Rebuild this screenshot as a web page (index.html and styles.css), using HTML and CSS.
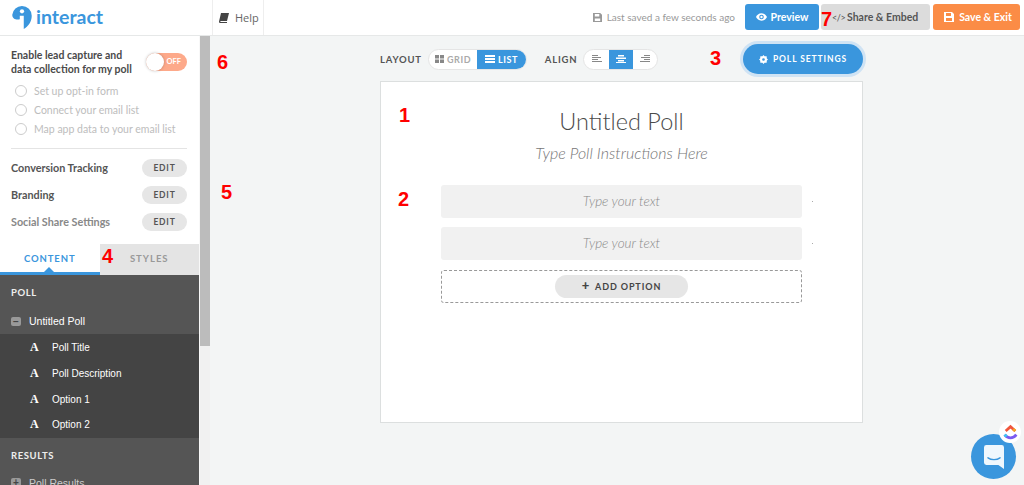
FILE: index.html
```html
<!DOCTYPE html>
<html lang="en">
<head>
<meta charset="utf-8">
<title>Interact poll editor</title>
<link rel="stylesheet" href="styles.css">
</head>
<body>
<header class="topbar">
  <div class="logo">
    <svg class="logo-mark" width="22" height="23" viewBox="0 0 22 26"><path fill="#3a96dd" d="M11 0a11 11 0 0 1 11 11c0 7-4 12-9 15V11H8.500v4C5 16 0 15 0 10A11 11 0 0 1 11 0z"/><circle cx="11" cy="6" r="2.400" fill="#fff"/></svg>
    <span class="logo-text">interact</span>
  </div>
  <div class="help">
    <svg width="10" height="10" viewBox="0 0 10 10"><path fill="#444" d="M2 0h8L8 8H1.500a.8.8 0 0 0 0 1H8v1H1Q0 10 0 8.500z"/></svg>
    <span>Help</span>
  </div>
  <div class="top-actions">
    <span class="saved">
      <svg width="9" height="9" viewBox="0 0 10 10"><path fill="#999" d="M0 0h8l2 2v8H0zm2 1v3h5V1zm0 5v3h6V6z"/></svg>
      Last saved a few seconds ago
    </span>
    <button class="top-btn btn-preview">
      <svg width="11" height="8" viewBox="0 0 12 8"><path fill="#fff" d="M6 0c3 0 5 2 6 4-1 2-3 4-6 4S1 6 0 4c1-2 3-4 6-4zm0 1.500a2.500 2.500 0 1 0 0 5 2.500 2.500 0 0 0 0-5z"/><circle cx="6" cy="4" r="1.300" fill="#fff"/></svg>
      Preview
    </button>
    <button class="top-btn btn-share">
      <span class="code-mark">&lt;/&gt;</span>
      Share &amp; Embed
    </button>
    <button class="top-btn btn-save">
      <svg width="10" height="10" viewBox="0 0 10 10"><path fill="#fff" d="M0 0h8l2 2v8H0zm2 1v3h5V1zm0 5v3h6V6z"/></svg>
      Save &amp; Exit
    </button>
  </div>
</header>

<div class="workspace">
  <aside class="sidebar">
    <section class="lead">
      <div class="lead-head">
        <p class="lead-title">Enable lead capture and data collection for my poll</p>
        <div class="toggle"><span class="knob"></span><span class="toggle-label">OFF</span></div>
      </div>
      <ul class="steps">
        <li><span class="radio"></span>Set up opt-in form</li>
        <li><span class="radio"></span>Connect your email list</li>
        <li><span class="radio"></span>Map app data to your email list</li>
      </ul>
    </section>
    <section class="settings">
      <div class="setting"><span>Conversion Tracking</span><button class="edit">EDIT</button></div>
      <div class="setting"><span>Branding</span><button class="edit">EDIT</button></div>
      <div class="setting muted"><span>Social Share Settings</span><button class="edit">EDIT</button></div>
    </section>
    <nav class="tabs">
      <div class="tab active">CONTENT</div>
      <div class="tab">STYLES</div>
    </nav>
    <section class="tree">
      <h3 class="tree-head">POLL</h3>
      <div class="tree-row"><span class="square">&minus;</span>Untitled Poll</div>
      <ul class="tree-items">
        <li><span class="glyph">A</span>Poll Title</li>
        <li><span class="glyph">A</span>Poll Description</li>
        <li><span class="glyph">A</span>Option 1</li>
        <li><span class="glyph">A</span>Option 2</li>
      </ul>
      <h3 class="tree-head results">RESULTS</h3>
      <div class="tree-row dim"><span class="square">+</span>Poll Results</div>
    </section>
  </aside>
  <div class="scrollbar"><div class="thumb"></div></div>

  <main class="stage">
    <div class="toolbar">
      <span class="tool-label">LAYOUT</span>
      <div class="segment">
        <span class="seg seg-text">
          <svg width="9" height="8" viewBox="0 0 9 8"><path fill="#888" d="M0 0h4v3.500H0zM5 0h4v3.500H5zM0 4.500h4V8H0zM5 4.500h4V8H5z"/></svg>
          GRID
        </span>
        <span class="seg seg-text on">
          <svg width="10" height="8" viewBox="0 0 10 8"><path fill="#fff" d="M0 0h10v2H0zM0 3h10v2H0zM0 6h10v2H0z"/></svg>
          LIST
        </span>
      </div>
      <span class="tool-label align-label">ALIGN</span>
      <div class="segment">
        <span class="seg seg-icon"><svg width="10" height="8" viewBox="0 0 10 8"><path fill="#888" d="M0 0h6v1H0zM0 2h9v1H0zM0 4h6v1H0zM0 6h10v1H0z"/></svg></span>
        <span class="seg seg-icon on"><svg width="10" height="8" viewBox="0 0 10 8"><path fill="#fff" d="M2 0h6v1.500H2zM0 2.500h10V4H0zM2 5h6v1.500H2zM0 7h10v1H0z"/></svg></span>
        <span class="seg seg-icon"><svg width="10" height="8" viewBox="0 0 10 8"><path fill="#888" d="M4 0h6v1H4zM1 2h9v1H1zM4 4h6v1H4zM0 6h10v1H0z"/></svg></span>
      </div>
      <button class="poll-settings">
        <svg width="9" height="9" viewBox="0 0 10 10"><path fill="#fff" fill-rule="evenodd" d="M5 0l1.200 1.300L8.500 1.500l.2 2.300L10 5 8.700 6.200 8.500 8.500l-2.300.2L5 10 3.800 8.700 1.500 8.500l-.2-2.300L0 5l1.300-1.200.2-2.300 2.300-.2zM5 3.500a1.500 1.500 0 1 0 0 3 1.500 1.500 0 0 0 0-3z"/></svg>
        POLL SETTINGS
      </button>
    </div>

    <article class="canvas">
      <h1 class="poll-title">Untitled Poll</h1>
      <p class="poll-desc">Type Poll Instructions Here</p>
      <div class="options">
        <div class="option-row"><div class="option">Type your text</div><span class="dot"></span></div>
        <div class="option-row"><div class="option">Type your text</div><span class="dot"></span></div>
        <div class="add-box"><button class="add-btn"><b>+</b> ADD OPTION</button></div>
      </div>
    </article>
  </main>
</div>

<span class="mark m1">1</span>
<span class="mark m2">2</span>
<span class="mark m3">3</span>
<span class="mark m4">4</span>
<span class="mark m5">5</span>
<span class="mark m6">6</span>
<span class="mark m7">7</span>

<div class="chat">
  <svg width="20" height="24" viewBox="0 0 25 30"><path fill="#fff" fill-opacity=".92" d="M3 0h19a3 3 0 0 1 3 3v27l-7-5H3a3 3 0 0 1-3-3V3a3 3 0 0 1 3-3z"/><path fill="none" stroke="#3a96dd" stroke-width="1.800" stroke-linecap="round" d="M5 16c4 3 11 3 15 0"/></svg>
</div>
<div class="clickup">
  <svg width="15" height="16" viewBox="0 0 14 15"><path fill="none" stroke="#f0563c" stroke-width="2.600" d="M2.500 6.500L7 2.500l4.500 4"/><path fill="none" stroke="#7b5cf0" stroke-width="2.600" d="M1.500 10c3 4 8 4 11 0"/><path fill="none" stroke="#f5a623" stroke-width="2.600" d="M9.500 4.800l2 1.700"/><path fill="none" stroke="#3cc8f0" stroke-width="2.600" d="M1.500 10l1.800 1.800"/></svg>
</div>
```

FILE: styles.css
```css
* { box-sizing: border-box; }
html, body { height: 100%; }
body {
  margin: 0;
  height: 485px;
  overflow: hidden;
  position: relative;
  background: #f3f5f5;
  color: #444;
  font-family: "Lato", "Liberation Sans", sans-serif;
}
button { font-family: inherit; border: 0; cursor: pointer; }
ul { list-style: none; margin: 0; padding: 0; }
h1, h3, p { margin: 0; }

.topbar {
  height: 36px;
  display: flex;
  align-items: stretch;
  background: #fff;
  border-bottom: 1px solid #e6e8e8;
}
.logo {
  width: 212px;
  display: flex;
  align-items: flex-start;
  gap: 3px;
  padding: 6px 0 0 11px;
}
.logo-text {
  color: #3a96dd;
  font-size: 19.500px;
  font-weight: 700;
  line-height: 22px;
}
.help {
  width: 52px;
  display: flex;
  align-items: center;
  gap: 6px;
  padding-left: 6px;
  border-left: 1px solid #eee;
  border-right: 1px solid #eee;
  color: #666;
  font-size: 11px;
  font-family: "Open Sans", sans-serif;
}
.top-actions {
  flex: 1;
  display: flex;
  align-items: flex-start;
  padding-top: 4px;
  padding-right: 4px;
  justify-content: flex-end;
}
.saved {
  display: flex;
  align-items: center;
  gap: 5px;
  height: 26px;
  color: #999;
  font-size: 10px;
  margin-right: 10px;
}
.top-btn {
  height: 26px;
  border-radius: 3px;
  display: flex;
  align-items: center;
  justify-content: center;
  gap: 4px;
  padding: 0;
  font-size: 10.500px;
  font-weight: 700;
}
.btn-preview { width: 74px; background: #3a96dd; color: #fff; }
.btn-share {
  width: 109px;
  margin-left: 2px;
  justify-content: flex-start;
  gap: 3px;
  padding-left: 11px;
  background: #dcdcdc;
  color: #555;
}
.btn-save { width: 87px; margin-left: 3px; padding-left: 3px; background: #fb8c46; color: #fff; gap: 5px; }
.code-mark { width: 12px; font-size: 9px; font-weight: 400; letter-spacing: -.4px; white-space: nowrap; }

.workspace { display: flex; height: 449px; }

.sidebar {
  width: 199px;
  flex: none;
  background: #fff;
  overflow: hidden;
  display: flex;
  flex-direction: column;
}
.lead { flex: none; padding: 12px 12px 0 11px; height: 112px; }
.lead-head { display: flex; align-items: center; justify-content: space-between; }
.lead-title {
  width: 130px;
  font-size: 10.500px;
  line-height: 14px;
  font-weight: 700;
  color: #4a4a4a;
}
.toggle {
  width: 41px;
  height: 18px;
  position: relative;
  border-radius: 9px;
  background: #fda98a;
  color: #fff;
  font-size: 7.500px;
  font-weight: 700;
  line-height: 18px;
  text-align: right;
  padding-right: 6px;
}
.knob {
  position: absolute;
  left: 0;
  top: 0;
  width: 18px;
  height: 18px;
  border-radius: 50%;
  background: #fff;
  box-shadow: 0 0 3px rgba(0,0,0,.25);
}
.steps { margin-top: 5px; }
.steps li {
  height: 19px;
  display: flex;
  align-items: center;
  gap: 7px;
  padding-left: 4px;
  color: #bdbdbd;
  font-size: 10.500px;
}
.radio {
  width: 12px;
  height: 12px;
  border: 1px solid #ccc;
  border-radius: 50%;
}
.settings {
  flex: none;
  margin: 0 12px 0 11px;
  padding-top: 5px;
  height: 96px;
  border-top: 1px solid #e4e4e4;
}
.setting {
  height: 27px;
  display: flex;
  align-items: center;
  justify-content: space-between;
  color: #555;
  font-size: 10.800px;
  font-weight: 700;
}
.setting.muted { color: #888; }
.edit {
  width: 45px;
  height: 18px;
  padding: 0;
  border-radius: 9px;
  background: #e6e6e6;
  color: #555;
  font-size: 8.500px;
  font-weight: 700;
  letter-spacing: .8px;
}
.tabs { display: flex; height: 31px; flex: none; }
.tab {
  flex: 1;
  display: flex;
  align-items: center;
  justify-content: center;
  padding-bottom: 3px;
  background: #e4e4e4;
  color: #999;
  font-size: 9.500px;
  font-weight: 700;
  letter-spacing: 1px;
}
.tab.active {
  position: relative;
  background: #fff;
  color: #3a96dd;
  border-bottom: 3px solid #3a96dd;
  padding-bottom: 0;
  letter-spacing: .9px;
}
.tab.active::after {
  content: "";
  position: absolute;
  left: 44px;
  bottom: 0;
  border: 5px solid transparent;
  border-top: 0;
  border-bottom-color: #3a96dd;
}
.tree { flex: none; height: 210px; overflow: hidden; background: #555; color: #fff; }
.tree-head {
  height: 33px;
  padding: 11px 0 0 11px;
  font-size: 9.500px;
  line-height: 14px;
  font-weight: 700;
  letter-spacing: .6px;
  color: #eee;
}
.tree-head.results { height: 32px; }
.tree-row {
  height: 26px;
  display: flex;
  align-items: center;
  gap: 8px;
  padding-left: 11px;
  font-size: 10.500px;
  font-family: "Liberation Sans", sans-serif;
}
.tree-row.dim { color: #ccc; }
.square {
  width: 10px;
  height: 9px;
  border-radius: 2px;
  background: #999;
  color: #444;
  font-size: 10px;
  font-weight: 700;
  line-height: 9px;
  text-align: center;
}
.tree-items { background: #444; padding-top: 1px; }
.tree-items li {
  height: 25.700px;
  display: flex;
  align-items: center;
  padding-left: 30px;
  font-size: 10px;
  font-family: "Liberation Sans", sans-serif;
}
.glyph {
  width: 22px;
  font-family: "Liberation Serif", serif;
  font-size: 12px;
  font-weight: 700;
}

.scrollbar { width: 11px; flex: none; background: #f1f1f1; border-left: 1px solid #f8f8f8; }
.thumb { height: 310px; background: #bcbcbc; }

.stage { flex: 1; padding: 8px 0 0 170px; }
.toolbar {
  width: 483px;
  height: 30px;
  display: flex;
  align-items: center;
  margin-bottom: 7px;
}
.tool-label {
  font-size: 9.500px;
  font-weight: 700;
  letter-spacing: .8px;
  color: #555;
  margin-right: 6px;
}
.align-label { margin-left: 18px; margin-right: 6px; }
.segment {
  display: flex;
  height: 21px;
  border: 1px solid #e5e5e5;
  border-radius: 11px;
  background: #fff;
  overflow: hidden;
}
.seg { display: flex; align-items: center; justify-content: center; gap: 3px; }
.seg-text {
  width: 48.500px;
  color: #aaa;
  font-size: 9px;
  font-weight: 700;
  letter-spacing: .6px;
}
.seg-icon { width: 24.300px; }
.seg.on { background: #3a96dd; color: #fff; }
.poll-settings {
  margin-left: auto;
  width: 120px;
  height: 30px;
  padding: 0;
  display: flex;
  align-items: center;
  justify-content: center;
  gap: 5px;
  border-radius: 15px;
  background: #3a96dd;
  color: #fff;
  font-size: 8.500px;
  font-weight: 700;
  letter-spacing: .9px;
  box-shadow: 0 0 0 3px #cfe3f4;
}
.canvas {
  width: 483px;
  height: 342px;
  background: #fff;
  border: 1px solid #dcdfdf;
  padding-top: 23px;
  text-align: center;
}
.poll-title {
  font-size: 23.500px;
  line-height: 32px;
  font-weight: 300;
  color: #4a4a4a;
}
.poll-desc {
  margin-top: 6px;
  font-size: 16px;
  line-height: 20px;
  font-style: italic;
  font-weight: 300;
  color: #777;
}
.options { width: 361px; margin: 22px 0 0 60px; }
.option-row { position: relative; margin-bottom: 9.300px; }
.option {
  height: 33px;
  border-radius: 3px;
  background: #f1f1f1;
  color: #888;
  font-size: 13.500px;
  font-style: italic;
  font-weight: 300;
  line-height: 33px;
}
.dot {
  position: absolute;
  right: -11px;
  top: 16px;
  width: 1px;
  height: 1px;
  background: #aaa;
}
.add-box {
  height: 33px;
  display: flex;
  align-items: center;
  justify-content: center;
  border: 1px dashed #999;
  border-radius: 3px;
}
.add-btn {
  width: 133px;
  height: 23px;
  padding: 0;
  border-radius: 12px;
  background: #e6e6e6;
  color: #444;
  font-size: 9px;
  font-weight: 700;
  letter-spacing: .9px;
}
.add-btn b { font-size: 13px; line-height: 9px; margin-right: 2px; }

.mark {
  position: absolute;
  color: #f00;
  font-family: "Liberation Sans", sans-serif;
  font-size: 20px;
  font-weight: 700;
  line-height: 22px;
}
.m1 { left: 399px; top: 104px; }
.m2 { left: 398px; top: 188px; }
.m3 { left: 710px; top: 47px; }
.m4 { left: 102px; top: 245px; }
.m5 { left: 221px; top: 181px; }
.m6 { left: 217px; top: 51px; }
.m7 { left: 821px; top: 8px; }

.chat {
  position: absolute;
  left: 971px;
  top: 434px;
  width: 45px;
  height: 45px;
  border-radius: 50%;
  background: #3a96dd;
  display: flex;
  align-items: center;
  justify-content: center;
}
.clickup {
  position: absolute;
  left: 999px;
  top: 421px;
  width: 22px;
  height: 22px;
  border-radius: 50%;
  background: #fff;
  display: flex;
  align-items: center;
  justify-content: center;
}
```
